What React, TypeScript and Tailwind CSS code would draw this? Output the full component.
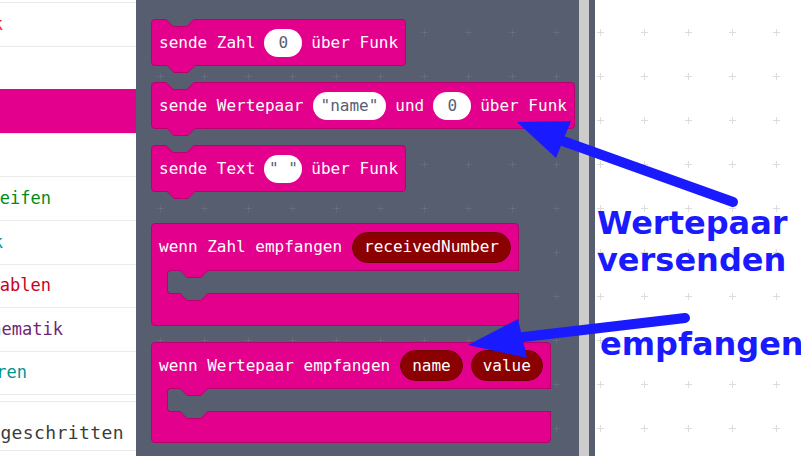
import type { ReactNode } from 'react';

const PINK = '#e3008c';
const EDGE = '#b8006f';
const FLY = '#565e70';

const rows = [
  { label: 'Musik', color: 'text-[#e63022]', w: 'w-[3px]' },
  { label: 'LED', color: 'text-[#5c2d91]', w: 'w-[0px]' },
  { label: 'Funk', color: 'text-white', w: 'w-[0px]', active: true },
  { label: 'Pins', color: 'text-[#b22222]', w: 'w-[0px]' },
  { label: 'Schleifen', color: 'text-[#008c14]', w: 'w-[51px]' },
  { label: 'Logik', color: 'text-[#00999b]', w: 'w-[3px]' },
  { label: 'Variablen', color: 'text-[#c8001e]', w: 'w-[51px]' },
  { label: 'Mathematik', color: 'text-[#712672]', w: 'w-[63px]' },
  { label: 'Sensoren', color: 'text-[#00938f]', w: 'w-[27px]' },
];

function Grid({ id, x, y, color }: { id: string; x: number; y: number; color: string }) {
  return (
    <svg className="absolute inset-0 w-full h-full">
      <defs>
        <pattern id={id} width="44" height="44" patternUnits="userSpaceOnUse" x={x} y={y}>
          <path d="M19 22.5h7M22.5 19v7" stroke={color} strokeWidth="1" fill="none" />
        </pattern>
      </defs>
      <rect width="100%" height="100%" fill={`url(#${id})`} />
    </svg>
  );
}

// top dip (previous connection) and bottom tab (next connection)
function Dip({ className, fill }: { className: string; fill: string }) {
  return (
    <svg className={`absolute w-[28px] h-[8px] ${className}`} viewBox="0 0 28 8">
      <polygon points="0,0 28,0 21,7 7,7" fill={fill} />
      <path d="M0,0.5 L7,7.5 L21,7.5 L28,0.5" stroke={EDGE} strokeWidth="1" fill="none" />
    </svg>
  );
}

function Field({ children, w }: { children: ReactNode; w?: string }) {
  return (
    <span className={`flex items-center justify-center h-[28px] rounded-full bg-white text-[#575e75] whitespace-pre ${w ?? 'px-[8px]'}`}>
      {children}
    </span>
  );
}

function Var({ children }: { children: ReactNode }) {
  return (
    <span className="flex items-center h-[31px] px-[11px] rounded-full bg-[#8b0000] border border-[#6e0000] text-white">
      {children}
    </span>
  );
}

function Stack({ children }: { children: ReactNode }) {
  return (
    <div className="relative self-start">
      <div className="flex items-center h-[47px] pl-[7px] pr-[7px] gap-[9px] bg-[#e3008c] border border-[#b8006f] rounded-[4px] text-white whitespace-pre">
        {children}
      </div>
      <Dip className="top-0 left-[15px]" fill={FLY} />
      <Dip className="top-[calc(100%-1px)] left-[16px]" fill={PINK} />
    </div>
  );
}

function Event({ children, top, bottom }: { children: ReactNode; top: string; bottom: string }) {
  return (
    <div className="self-start bg-[#e3008c] border border-[#b8006f] rounded-[4px] text-white whitespace-pre">
      <div className={`flex items-center pl-[7px] pr-[7px] gap-[10px] ${top}`}>{children}</div>
      <div className="flex h-[24px]">
        <div className="w-[15px]" />
        <div className="relative flex-1 -mr-px bg-[#565e70] border-y border-l border-[#b8006f] rounded-l-[4px]">
          <Dip className="top-[-1px] left-[12px]" fill={PINK} />
          <Dip className="top-[calc(100%)] left-[12px]" fill={FLY} />
        </div>
      </div>
      <div className={bottom} />
    </div>
  );
}

export default function App() {
  return (
    <div className="relative flex w-[801px] h-[456px] overflow-hidden bg-white font-['DejaVu_Sans_Mono',monospace]">
      <aside className="w-[136px] shrink-0 overflow-hidden bg-white text-[17px]">
        <div className="h-[2px]" />
        {rows.map((r) => (
          <div
            key={r.label}
            className={`flex items-center h-[43.6px] border-t ${r.active ? 'border-[#e3008c] bg-[#e3008c]' : 'border-[#ebebeb]'}`}
          >
            <div className={`flex justify-end ${r.w}`}>
              <span className={`shrink-0 whitespace-nowrap ${r.color}`}>{r.label}</span>
            </div>
          </div>
        ))}
        <div className="h-[7px] border-t border-[#ebebeb]" />
        <div className="flex items-center pt-[12px] h-[50px] border-y border-[#ebebeb]">
          <div className="flex justify-end w-[124px]">
            <span className="shrink-0 whitespace-nowrap text-[18px] tracking-[0.4px] text-[#3c3c3c]">Fortgeschritten</span>
          </div>
        </div>
      </aside>

      <div className="relative flex w-[459px] shrink-0 bg-[#565e70]">
        <Grid id="fly" x={2} y={10} color="rgba(255,255,255,0.07)" />
        <div className="relative flex flex-col w-[443px] pt-[19px] pl-[15px] text-[16px]">
          <Stack>
            <span>sende Zahl</span>
            <Field w="w-[38px]">0</Field>
            <span>über Funk</span>
          </Stack>
          <div className="h-[16px]" />
          <Stack>
            <span>sende Wertepaar</span>
            <Field>"name"</Field>
            <span>und</span>
            <Field w="w-[38px]">0</Field>
            <span>über Funk</span>
          </Stack>
          <div className="h-[16px]" />
          <Stack>
            <span>sende Text</span>
            <Field w="w-[38px]">" "</Field>
            <span>über Funk</span>
          </Stack>
          <div className="h-[31px]" />
          <Event top="h-[46px]" bottom="h-[31px]">
            <span>wenn Zahl empfangen</span>
            <Var>receivedNumber</Var>
          </Event>
          <div className="h-[16px]" />
          <Event top="h-[45px]" bottom="h-[30px]">
            <span>wenn Wertepaar empfangen</span>
            <div className="flex gap-[8px]">
              <Var>name</Var>
              <Var>value</Var>
            </div>
          </Event>
        </div>
        <div className="w-[10px] bg-[#cccccc]" />
      </div>

      <main className="relative flex-1 bg-white font-['DejaVu_Sans',sans-serif] font-bold text-[32px] leading-[37px] text-[#1a1aff]">
        <Grid id="ws" x={-17} y={10} color="#dcdcdc" />
        <div className="absolute left-[2px] top-[205px] whitespace-nowrap">
          Wertepaar
          <br />
          versenden
        </div>
        <div className="absolute left-[5px] top-[326px] whitespace-nowrap">empfangen</div>
      </main>

      <svg className="absolute inset-0 w-full h-full pointer-events-none" viewBox="0 0 801 456">
        <line x1="560" y1="140" x2="733" y2="202" stroke="#1a1aff" strokeWidth="10" strokeLinecap="round" />
        <polygon points="517,122 571,121 556,158" fill="#1a1aff" />
        <line x1="515" y1="338" x2="685" y2="318" stroke="#1a1aff" strokeWidth="10" strokeLinecap="round" />
        <polygon points="468,345 518,319 527,358" fill="#1a1aff" />
      </svg>
    </div>
  );
}
